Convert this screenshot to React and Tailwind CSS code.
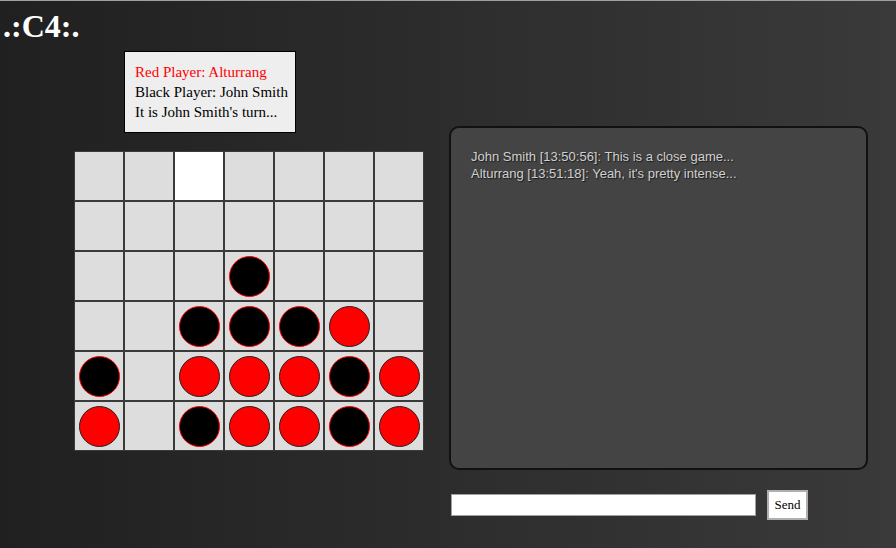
import React from "react";

const board = [
  ".......",
  ".......",
  "...B...",
  "..BBBR.",
  "B.RRRBR",
  "R.BRRBR",
];

function Cell({ v, hi }) {
  return (
    <div
      className={`w-[50px] h-[50px] border border-[#3a3a3a] flex items-center justify-center ${
        hi ? "bg-white" : "bg-[#dddddd]"
      }`}
    >
      {v === "R" && (
        <div className="w-[41px] h-[41px] rounded-full bg-[#ff0000] border border-[#222]" />
      )}
      {v === "B" && (
        <div className="w-[41px] h-[41px] rounded-full bg-black border border-[#ff0000]" />
      )}
    </div>
  );
}

export default function App() {
  return (
    <div className="w-full h-[548px] overflow-hidden border-t border-[#a0a0a0] bg-gradient-to-r from-[#202020] to-[#3a3a3a] font-['Liberation_Serif',serif]">
      <h1 className="text-[32px] font-bold leading-[37px] text-white pl-[3px] pt-[7px] m-0">
        .:C4:.
      </h1>
      <div className="flex mt-[6px]">
        <div className="ml-[74px] w-[350px] flex flex-col">
          <div className="ml-[50px] w-[172px] bg-[#eeeeee] border border-black py-[10px] pl-[10px] pr-0 text-[15px] leading-[20px] text-black whitespace-nowrap">
            <div className="text-[#ff0000]">Red Player: Alturrang</div>
            <div>Black Player: John Smith</div>
            <div>It is John Smith's turn...</div>
          </div>
          <div className="mt-[18px] flex flex-col">
            {board.map((row, r) => (
              <div key={r} className="flex">
                {row.split("").map((v, c) => (
                  <Cell key={c} v={v} hi={r === 0 && c === 2} />
                ))}
              </div>
            ))}
          </div>
        </div>
        <div className="ml-[25px] mt-[75px] flex flex-col">
          <div className="w-[419px] h-[344px] rounded-[10px] border-2 border-[#111111] bg-[#444444] px-[20px] py-[20px] font-['Liberation_Sans',Arial,sans-serif] text-[13px] leading-[17px] text-[#d0d0d0] [text-shadow:1px_1px_1px_#1a1a1a]">
            <div>John Smith [13:50:56]: This is a close game...</div>
            <div>Alturrang [13:51:18]: Yeah, it's pretty intense...</div>
          </div>
          <div className="flex items-center mt-[20px]">
            <input
              type="text"
              className="ml-[2px] w-[305px] h-[22px] bg-white border border-[#a0a0a0] outline-none"
            />
            <button className="ml-[11px] w-[41px] h-[30px] bg-white border-2 border-[#b0b0b0] text-[13px] text-black font-['Liberation_Serif',serif] flex items-center justify-center">
              Send
            </button>
          </div>
        </div>
      </div>
    </div>
  );
}
